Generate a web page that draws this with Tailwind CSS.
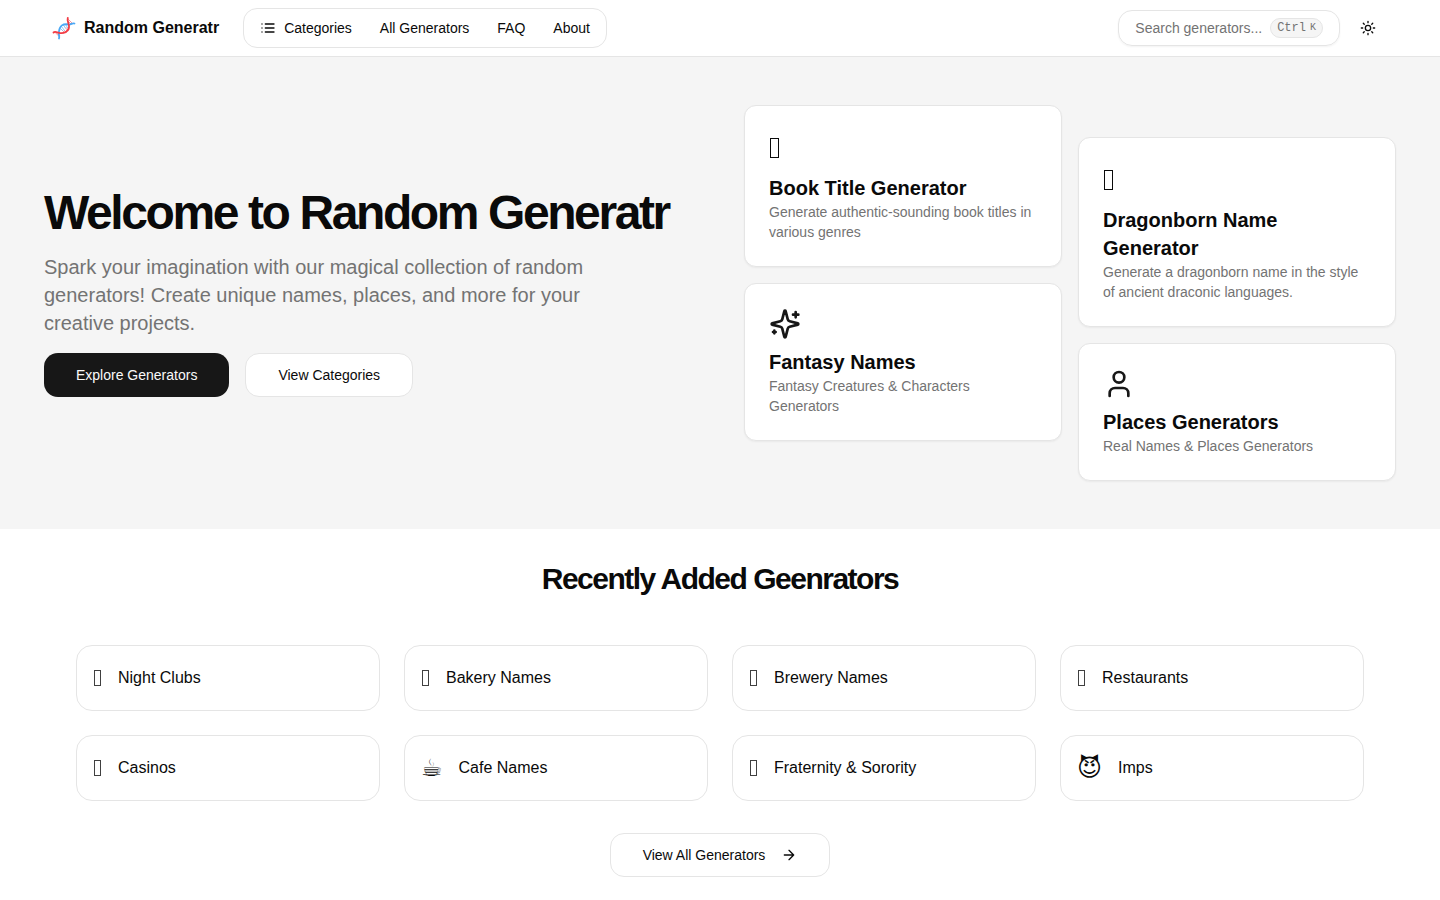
<!DOCTYPE html>
<html lang="en">
  <head>
    <meta charset="UTF-8" />
    <meta name="viewport" content="width=device-width, initial-scale=1.0" />
    <title>Random Generatr</title>
    <script src="https://cdn.jsdelivr.net/npm/@tailwindcss/browser@4"></script>
  </head>
  <body class="bg-white text-neutral-950 font-['Liberation_Sans',Arial,sans-serif]">
    <header class="border-b border-neutral-200 bg-white">
      <div class="max-w-[1400px] mx-auto h-14 px-8 flex items-center justify-between">
        <div class="flex items-center gap-6">
          <a href="#" class="flex items-center gap-2 font-bold">
            <svg class="size-6" viewBox="0 0 24 24" fill="none" stroke-linecap="round">
              <g stroke="#f58a90" stroke-width="0.9">
                <path d="M3.500 16.800l4 4M5.500 17l2 2M16 5l3 3M16 3l4.500 4.500" />
                <path d="M12.500 14.500l2 2M15 11.500l1.500 1.500M10.500 14.500l2.500 2.500M13.500 12l2.500 2.500" />
              </g>
              <g stroke="#7cc0f5" stroke-width="0.9">
                <path d="M8.500 12.500l2 2M9.500 10.500l3 4M11.500 9.200l2 2.800M13.500 8.500l2 3" />
              </g>
              <path stroke="#4aa8f5" stroke-width="1.8" d="M7 22.500C8 20 6 18.500 7 15.500 7.500 9.500 11 7.500 16.700 8.500 19 9 20 6.500 22.500 7.500" />
              <path stroke="#f23b44" stroke-width="1.8" d="M1.500 16.500C3 15 5 16.500 7 16.800 12 17.800 17.500 15 17 10 16.700 7 14.800 5 15.800 1.800" />
            </svg>
            Random Generatr
          </a>
          <nav class="flex items-center gap-1 h-10 p-1 border border-neutral-200 rounded-[14px] text-sm">
            <button type="button" class="flex items-center gap-2 h-full px-3">
              <svg class="size-4" viewBox="0 0 24 24" fill="none" stroke="currentColor" stroke-width="2" stroke-linecap="round" stroke-linejoin="round">
                <path d="M8 6h13M8 12h13M8 18h13M3 6h.01M3 12h.01M3 18h.01" />
              </svg>
              Categories
            </button>
            <a href="#" class="px-3">All Generators</a>
            <a href="#" class="px-3">FAQ</a>
            <a href="#" class="px-3">About</a>
          </nav>
        </div>

        <div class="flex items-center gap-2">
          <button type="button" class="flex items-center gap-2 h-9 px-4 border border-neutral-200 rounded-[14px] shadow-xs text-sm text-neutral-500">
            Search generators...
            <kbd class="flex items-center gap-1 h-5 px-1.5 border border-neutral-200 rounded-[12px] bg-neutral-100 text-xs font-['Liberation_Mono',monospace]">Ctrl <span class="text-[10px]">K</span></kbd>
          </button>
          <button type="button" aria-label="Toggle theme" class="flex items-center justify-center size-10">
            <svg class="size-4" viewBox="0 0 24 24" fill="none" stroke="currentColor" stroke-width="2" stroke-linecap="round" stroke-linejoin="round">
              <circle cx="12" cy="12" r="4" />
              <path d="M12 2v2M12 20v2M4.93 4.93l1.41 1.41M17.66 17.66l1.41 1.41M2 12h2M20 12h2M6.34 17.66l-1.41 1.41M19.07 4.93l-1.41 1.41" />
            </svg>
          </button>
        </div>
      </div>
    </header>

    <main>
      <!-- Hero -->
      <section class="bg-neutral-100">
        <div class="max-w-[1400px] mx-auto px-6 py-12 grid lg:grid-cols-2 gap-12 items-center">
          <div class="flex flex-col gap-4">
            <h1 class="text-5xl leading-none font-bold tracking-tighter">Welcome to Random Generatr</h1>
            <p class="max-w-[600px] text-xl text-neutral-500">Spark your imagination with our magical collection of random generators! Create unique names, places, and more for your creative projects.</p>
            <div class="flex gap-4 text-sm">
              <a href="#" class="flex items-center h-11 px-8 rounded-[14px] bg-neutral-900 text-neutral-50">Explore Generators</a>
              <a href="#" class="flex items-center h-11 px-8 rounded-[14px] border border-neutral-200 bg-white">View Categories</a>
            </div>
          </div>

          <div class="grid grid-cols-2 gap-4 items-start">
            <div class="flex flex-col gap-4">
              <a href="#" class="block p-6 border border-neutral-200 rounded-xl bg-white shadow-xs">
                <div class="flex items-center h-9 mb-2 px-px"><span class="w-[9px] h-5 border border-neutral-950"></span></div>
                <h3 class="text-xl font-bold">Book Title Generator</h3>
                <p class="text-sm text-neutral-500">Generate authentic-sounding book titles in various genres</p>
              </a>
              <a href="#" class="block p-6 border border-neutral-200 rounded-xl bg-white shadow-xs">
                <svg class="size-8 mb-2 text-neutral-900" viewBox="0 0 24 24" fill="none" stroke="currentColor" stroke-width="2" stroke-linecap="round" stroke-linejoin="round">
                  <path d="M9.937 15.5A2 2 0 0 0 8.5 14.063l-6.135-1.582a.5.5 0 0 1 0-.962L8.5 9.936A2 2 0 0 0 9.937 8.5l1.582-6.135a.5.5 0 0 1 .963 0L14.063 8.5A2 2 0 0 0 15.5 9.937l6.135 1.581a.5.5 0 0 1 0 .964L15.5 14.063a2 2 0 0 0-1.437 1.437l-1.582 6.135a.5.5 0 0 1-.963 0z" />
                  <path d="M20 3v4M22 5h-4M4 17v2M5 18H3" />
                </svg>
                <h3 class="text-xl font-bold">Fantasy Names</h3>
                <p class="text-sm text-neutral-500">Fantasy Creatures &amp; Characters Generators</p>
              </a>
            </div>
            <div class="flex flex-col gap-4 pt-8">
              <a href="#" class="block p-6 border border-neutral-200 rounded-xl bg-white shadow-xs">
                <div class="flex items-center h-9 mb-2 px-px"><span class="w-[9px] h-5 border border-neutral-950"></span></div>
                <h3 class="text-xl font-bold">Dragonborn Name Generator</h3>
                <p class="text-sm text-neutral-500">Generate a dragonborn name in the style of ancient draconic languages.</p>
              </a>
              <a href="#" class="block p-6 border border-neutral-200 rounded-xl bg-white shadow-xs">
                <svg class="size-8 mb-2 text-neutral-900" viewBox="0 0 24 24" fill="none" stroke="currentColor" stroke-width="2" stroke-linecap="round" stroke-linejoin="round">
                  <path d="M19 21v-2a4 4 0 0 0-4-4H9a4 4 0 0 0-4 4v2" />
                  <circle cx="12" cy="7" r="4" />
                </svg>
                <h3 class="text-xl font-bold">Places Generators</h3>
                <p class="text-sm text-neutral-500">Real Names &amp; Places Generators</p>
              </a>
            </div>
          </div>
        </div>
      </section>

      <!-- Recently added -->
      <section class="max-w-[1400px] mx-auto px-14 pt-8 pb-6">
        <h2 class="mb-12 text-3xl font-bold tracking-tighter text-center">Recently Added Geenrators</h2>
        <div class="grid grid-cols-2 lg:grid-cols-4 gap-6">
          <a href="#" class="flex items-center gap-4 p-4 border border-neutral-200 rounded-2xl">
            <span class="flex items-center h-8 px-px"><span class="w-[7px] h-4 border border-neutral-700"></span></span>
            Night Clubs
          </a>
          <a href="#" class="flex items-center gap-4 p-4 border border-neutral-200 rounded-2xl">
            <span class="flex items-center h-8 px-px"><span class="w-[7px] h-4 border border-neutral-700"></span></span>
            Bakery Names
          </a>
          <a href="#" class="flex items-center gap-4 p-4 border border-neutral-200 rounded-2xl">
            <span class="flex items-center h-8 px-px"><span class="w-[7px] h-4 border border-neutral-700"></span></span>
            Brewery Names
          </a>
          <a href="#" class="flex items-center gap-4 p-4 border border-neutral-200 rounded-2xl">
            <span class="flex items-center h-8 px-px"><span class="w-[7px] h-4 border border-neutral-700"></span></span>
            Restaurants
          </a>
          <a href="#" class="flex items-center gap-4 p-4 border border-neutral-200 rounded-2xl">
            <span class="flex items-center h-8 px-px"><span class="w-[7px] h-4 border border-neutral-700"></span></span>
            Casinos
          </a>
          <a href="#" class="flex items-center gap-4 p-4 border border-neutral-200 rounded-2xl">
            <span class="text-2xl font-['DejaVu_Sans',sans-serif]">&#x2615;&#xFE0E;</span>
            Cafe Names
          </a>
          <a href="#" class="flex items-center gap-4 p-4 border border-neutral-200 rounded-2xl">
            <span class="flex items-center h-8 px-px"><span class="w-[7px] h-4 border border-neutral-700"></span></span>
            Fraternity &amp; Sorority
          </a>
          <a href="#" class="flex items-center gap-4 p-4 border border-neutral-200 rounded-2xl">
            <span class="text-2xl font-['DejaVu_Sans',sans-serif]">&#x1F608;&#xFE0E;</span>
            Imps
          </a>
        </div>
        <div class="flex justify-center mt-8">
          <a href="#" class="flex items-center gap-4 h-11 px-8 border border-neutral-200 rounded-[14px] text-sm">
            View All Generators
            <svg class="size-4" viewBox="0 0 24 24" fill="none" stroke="currentColor" stroke-width="2" stroke-linecap="round" stroke-linejoin="round">
              <path d="M5 12h14M12 5l7 7-7 7" />
            </svg>
          </a>
        </div>
      </section>
    </main>
  </body>
</html>
